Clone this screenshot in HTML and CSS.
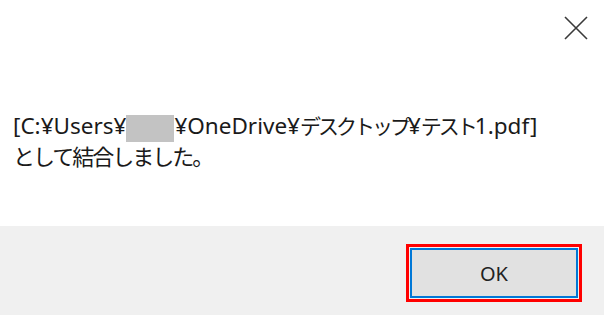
FILE: index.html
```html
<!DOCTYPE html>
<html lang="ja">
<head>
  <meta charset="UTF-8" />
  <title>結合</title>
  <link rel="stylesheet" href="styles.css">
</head>
<body>
  <div class="dialog">
    <div class="titlebar">
      <button class="close" aria-label="閉じる">
        <svg width="24" height="24" viewBox="0 0 24 24">
          <path d="M1 1 L23 23 M23 1 L1 23" stroke="#3a3a3a" stroke-width="1.6" fill="none"/>
        </svg>
      </button>
    </div>
    <div class="content">
      <p class="message">[C:¥Users¥<span class="masked"></span>¥OneDrive¥<span class="kana">デスクトップ</span>¥<span class="kana">テスト</span>1.pdf]<br><span class="kana-wide">として結合しました。</span></p>
    </div>
    <div class="footer">
      <div class="highlight">
        <button class="ok">OK</button>
      </div>
    </div>
  </div>
</body>
</html>
```

FILE: styles.css
```css
body {
  margin: 0;
  font-family: "Noto Sans", "Noto Sans CJK JP", sans-serif;
  background: #ffffff;
  overflow: hidden;
}

.dialog {
  width: 604px;
  height: 315px;
  display: flex;
  flex-direction: column;
}

.titlebar {
  height: 112px;
  display: flex;
  justify-content: flex-end;
  align-items: flex-start;
}
.close {
  border: none;
  background: none;
  padding: 0;
  margin: 16px 16px 0 0;
  width: 24px;
  height: 24px;
  cursor: pointer;
}

.content {
  flex: 1;
  padding: 0 13px;
}
.message {
  margin: 0;
  font-size: 22.5px;
  line-height: 28px;
  color: #1a1a1a;
  white-space: nowrap;
}
.kana {
  font-size: 21px;
  letter-spacing: -3px;
}
.kana-wide {
  font-size: 22px;
  letter-spacing: -2px;
}
.masked {
  display: inline-block;
  width: 48px;
  height: 27px;
  background: #c3c3c3;
  vertical-align: -8px;
}

.footer {
  height: 89px;
  background: #f0f0f0;
  display: flex;
  justify-content: flex-end;
  padding: 18px 22px 0 0;
  box-sizing: border-box;
}
.highlight {
  border: 3px solid #ff0000;
  width: 168px;
  height: 50px;
  padding: 1px;
}
.ok {
  width: 100%;
  height: 100%;
  box-sizing: border-box;
  border: 2px solid #0078d7;
  background: #e1e1e1;
  font-family: "Noto Sans", sans-serif;
  font-size: 20px;
  color: #222;
  padding: 0;
}
```
